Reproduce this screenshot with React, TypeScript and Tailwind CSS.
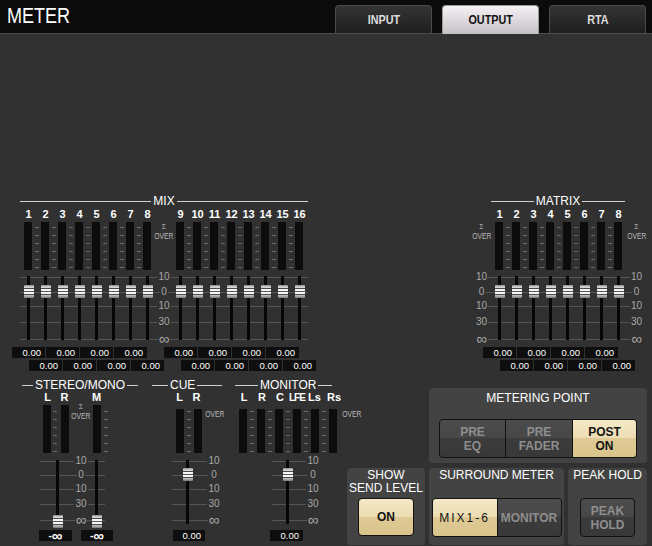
import type { ReactNode } from 'react'

const SANS = "font-['Liberation_Sans',Arial,sans-serif]"
const MARKS = ['10', '0', '10', '30', '∞']

// fader scale positions (px from top of the fader area)
const TOP_LINES = ['top-[1px]', 'top-[16px]', 'top-[30px]', 'top-[46px]', 'top-[63px]']
const TOP_LABELS = ['top-[-4px]', 'top-[11px]', 'top-[25px]', 'top-[41px]', 'top-[58px]']
const BOT_LINES = ['top-[1px]', 'top-[15px]', 'top-[29px]', 'top-[44px]', 'top-[60px]']
const BOT_LABELS = ['top-[-4px]', 'top-[10px]', 'top-[24px]', 'top-[39px]', 'top-[55px]']

const TAN = 'bg-[linear-gradient(to_bottom,#f4e8c6_0%,#ecdcb2_50%,#dfca95_50%,#d9c48c_100%)] text-[#141414]'
const DARK = 'bg-[linear-gradient(to_bottom,#4c4c4c_0%,#474747_50%,#3c3c3c_50%,#383838_100%)] text-[#8e8e8e]'

function Meter({ className = '' }: { className?: string }) {
  return <div className={`w-[8px] h-full shrink-0 bg-[#0c0c0c] ${className}`} />
}

function Ticks({ className = '' }: { className?: string }) {
  return (
    <div className={`w-[4px] shrink-0 flex flex-col gap-[7px] ${className}`}>
      {[0, 1, 2, 3, 4, 5].map(i => <div key={i} className="h-px bg-[#6a6a6a]" />)}
    </div>
  )
}

function SigmaOver({ className = '', sigma = true }: { className?: string, sigma?: boolean }) {
  return (
    <div className={`shrink-0 flex flex-col items-center text-[#b8b8b8] ${className}`}>
      {sigma && <span className="text-[7px] leading-[8px]">Σ</span>}
      <span className="text-[9px] leading-[11px] scale-x-[0.75]">OVER</span>
    </div>
  )
}

function GridLines({ tops, className }: { tops: string[], className: string }) {
  return (
    <>
      {tops.map(t => <div key={t} className={`absolute h-px bg-[#555555] ${t} ${className}`} />)}
    </>
  )
}

function Marks({ tops, className }: { tops: string[], className: string }) {
  return (
    <div className={`relative shrink-0 h-full ${className}`}>
      {tops.map((t, i) => (
        <div key={t} className={`absolute left-[-4px] right-[-4px] h-[10px] flex items-center justify-center ${t}`}>
          <span className={`bg-[#313131] px-[1px] text-[#a8a8a8] ${i === 4 ? 'text-[15px] leading-[10px]' : 'text-[10px] leading-[10px]'}`}>{MARKS[i]}</span>
        </div>
      ))}
    </div>
  )
}

function Fader({ className, cap }: { className: string, cap: string }) {
  return (
    <div className={`relative shrink-0 h-full flex justify-center ${className}`}>
      <div className="w-[3px] h-full bg-[#070707]" />
      <div className={`absolute left-1/2 -translate-x-1/2 w-[10px] h-[13px] rounded-[1px] bg-[linear-gradient(to_bottom,#8c8c8c_0px,#d4d4d4_2px,#d4d4d4_3px,#4a4a4a_3px,#4a4a4a_4px,#f5f5f5_4px,#f5f5f5_6px,#5a5a5a_6px,#5a5a5a_7px,#f5f5f5_7px,#f5f5f5_9px,#4a4a4a_9px,#4a4a4a_10px,#c8c8c8_10px,#7a7a7a_13px)] ${cap}`} />
    </div>
  )
}

function Val({ v = '0.00', className }: { v?: string, className: string }) {
  return (
    <div className={`h-[11px] shrink-0 bg-[#0e0e0e] text-[9.5px] leading-[11px] text-white text-right pr-[4px] ${className}`}>
      {v}
    </div>
  )
}

function MinusInf({ className }: { className: string }) {
  return (
    <div className={`h-[11px] shrink-0 bg-[#0e0e0e] flex items-center justify-center text-white font-bold ${className}`}>
      <span className="text-[10px] leading-[11px]">-</span>
      <span className="text-[15px] leading-[11px]">∞</span>
    </div>
  )
}

function Title({ text, left, right, className = '' }: { text: string, left: string, right: string, className?: string }) {
  return (
    <div className={`h-[13px] flex items-center ${className}`}>
      <div className={`h-px bg-[#d0d0d0] ${left}`} />
      <span className="px-[2px] text-[12px] leading-[13px] whitespace-nowrap">{text}</span>
      <div className={`h-px bg-[#d0d0d0] ${right}`} />
    </div>
  )
}

const range = (a: number, b: number) => Array.from({ length: b - a + 1 }, (_, i) => a + i)

function NumberRow({ nums }: { nums: number[] }) {
  return (
    <>
      {nums.map(n => (
        <div key={n} className="w-[17px] shrink-0 text-center text-[11px] leading-[13px] font-bold">{n}</div>
      ))}
    </>
  )
}

function MeterCols({ count }: { count: number }) {
  return (
    <>
      {range(1, count).map(i => (
        <div key={i} className="w-[17px] h-full shrink-0 flex">
          <Meter className="ml-[4px]" />
          {i < count && <Ticks className="ml-[3px] pt-[5px]" />}
        </div>
      ))}
    </>
  )
}

function FaderCols({ count }: { count: number }) {
  return (
    <>
      {range(1, count).map(i => <Fader key={i} className="w-[17px]" cap="top-[9px]" />)}
    </>
  )
}

function ValPair({ className }: { className: string }) {
  return (
    <div className={`flex gap-[1px] ${className}`}>
      {[0, 1, 2, 3].map(i => <Val key={i} className="w-[33px]" />)}
    </div>
  )
}

function MixBlock() {
  return (
    <div className="ml-[12px] w-[306px] shrink-0 flex flex-col">
      <Title text="MIX" left="flex-1" right="flex-1" className="ml-[8px] w-[288px]" />
      <div className="ml-[8px] h-[13px] flex">
        <NumberRow nums={range(1, 8)} />
        <div className="w-[16px] shrink-0" />
        <NumberRow nums={range(9, 16)} />
      </div>
      <div className="ml-[8px] mt-[1px] h-[48px] flex">
        <MeterCols count={8} />
        <SigmaOver className="w-[16px] pt-[1px]" />
        <MeterCols count={8} />
      </div>
      <div className="ml-[8px] mt-[6px] w-[288px] h-[64px] relative flex">
        <GridLines tops={TOP_LINES} className="left-0 right-0" />
        <FaderCols count={8} />
        <Marks tops={TOP_LABELS} className="w-[16px]" />
        <FaderCols count={8} />
      </div>
      <div className="mt-[7px] flex gap-[17px]">
        <ValPair className="" />
        <ValPair className="" />
      </div>
      <div className="mt-[2px] ml-[17px] flex gap-[17px]">
        <ValPair className="" />
        <ValPair className="" />
      </div>
    </div>
  )
}

function MatrixBlock() {
  return (
    <div className="ml-[154px] w-[174px] shrink-0 flex flex-col">
      <Title text="MATRIX" left="flex-1" right="flex-1" className="ml-[19px] w-[134px]" />
      <div className="ml-[19px] h-[13px] flex">
        <NumberRow nums={range(1, 8)} />
      </div>
      <div className="mt-[1px] h-[48px] flex">
        <SigmaOver className="w-[19px] pt-[1px]" />
        <MeterCols count={8} />
        <SigmaOver className="w-[19px] pt-[1px]" />
      </div>
      <div className="mt-[6px] h-[64px] relative flex">
        <GridLines tops={TOP_LINES} className="left-[14px] right-[14px]" />
        <Marks tops={TOP_LABELS} className="w-[19px]" />
        <FaderCols count={8} />
        <Marks tops={TOP_LABELS} className="w-[19px]" />
      </div>
      <ValPair className="mt-[7px] ml-[11px]" />
      <ValPair className="mt-[2px] ml-[28px]" />
    </div>
  )
}

function StereoBlock() {
  return (
    <div className="ml-[22px] w-[116px] shrink-0 flex flex-col">
      <Title text="STEREO/MONO" left="w-[11px]" right="flex-1" />
      <div className="h-[11px] flex text-[11px] leading-[11px] font-bold">
        <div className="ml-[17px] w-[17px] text-center">L</div>
        <div className="w-[17px] text-center">R</div>
        <div className="ml-[15px] w-[17px] text-center">M</div>
      </div>
      <div className="mt-[2px] h-[48px] flex">
        <Meter className="ml-[21px]" />
        <Ticks className="ml-[2px] pt-[6px]" />
        <Meter className="ml-[4px]" />
        <SigmaOver className="w-[24px] -mt-[2px]" />
        <Meter />
        <Ticks className="ml-[3px] pt-[6px]" />
      </div>
      <div className="mt-[7px] h-[64px] relative flex">
        <GridLines tops={BOT_LINES} className="left-[18px] w-[65px]" />
        <Fader className="ml-[28px] w-[15px]" cap="top-[55px]" />
        <Marks tops={BOT_LABELS} className="ml-[8px] w-[16px]" />
        <Fader className="w-[15px]" cap="top-[55px]" />
      </div>
      <div className="mt-[6px] flex">
        <MinusInf className="ml-[17px] w-[33px]" />
        <MinusInf className="ml-[9px] w-[32px]" />
      </div>
    </div>
  )
}

function CueBlock() {
  return (
    <div className="ml-[14px] w-[70px] shrink-0 flex flex-col">
      <Title text="CUE" left="w-[16px]" right="flex-1" />
      <div className="h-[11px] flex text-[11px] leading-[11px] font-bold">
        <div className="ml-[19px] w-[17px] text-center">L</div>
        <div className="w-[17px] text-center">R</div>
      </div>
      <div className="mt-[6px] h-[44px] flex">
        <Meter className="ml-[24px]" />
        <Ticks className="ml-[3px] pt-[2px]" />
        <Meter className="ml-[3px]" />
        <SigmaOver sigma={false} className="pt-[0px]" />
      </div>
      <div className="mt-[7px] h-[64px] relative flex">
        <GridLines tops={BOT_LINES} className="left-[20px] w-[36px]" />
        <Fader className="ml-[29px] w-[13px]" cap="top-[8px]" />
        <Marks tops={BOT_LABELS} className="ml-[14px] w-[12px]" />
      </div>
      <div className="mt-[6px] flex">
        <Val className="ml-[21px] w-[32px]" />
      </div>
    </div>
  )
}

function MonitorBlock() {
  const labels = ['L', 'R', 'C', 'LFE', 'Ls', 'Rs']
  return (
    <div className="ml-[13px] w-[112px] shrink-0 flex flex-col">
      <Title text="MONITOR" left="w-[23px]" right="w-[14px]" />
      <div className="h-[11px] flex text-[11px] leading-[11px] font-bold">
        <div className="w-[18px] shrink-0 text-center">L</div>
        <div className="w-[18px] shrink-0 text-center">R</div>
        <div className="w-[18px] shrink-0 text-center">C</div>
        <div className="w-[15px] shrink-0 text-center text-[10px] tracking-[-1px] whitespace-nowrap">LFE</div>
        <div className="w-[21px] shrink-0 text-center">Ls</div>
        <div className="w-[18px] shrink-0 text-center">Rs</div>
      </div>
      <div className="mt-[6px] h-[44px] flex">
        {labels.map((l, i) => (
          <div key={l} className="w-[18px] h-full shrink-0 flex">
            <Meter className="ml-[4px]" />
            {i < 5 && <Ticks className="ml-[3px] pt-[2px]" />}
          </div>
        ))}
        <SigmaOver sigma={false} className="-ml-[4px] pt-[0px]" />
      </div>
      <div className="mt-[7px] h-[64px] relative flex">
        <GridLines tops={BOT_LINES} className="left-[37px] w-[35px]" />
        <Fader className="ml-[46px] w-[13px]" cap="top-[8px]" />
        <Marks tops={BOT_LABELS} className="ml-[13px] w-[12px]" />
      </div>
      <div className="mt-[6px] flex">
        <Val className="ml-[35px] w-[33px]" />
      </div>
    </div>
  )
}

function Panel({ title, className, children }: { title: ReactNode, className: string, children: ReactNode }) {
  return (
    <div className={`shrink-0 rounded-[4px] bg-[#434343] flex flex-col items-center ${className}`}>
      <div className="text-[12px] leading-[13px] text-white text-center whitespace-nowrap">{title}</div>
      {children}
    </div>
  )
}

function Btn({ on, className, children }: { on: boolean, className: string, children: ReactNode }) {
  return (
    <div className={`flex flex-col items-center justify-center text-[12px] leading-[14px] font-bold ${on ? TAN : DARK} ${className}`}>
      {children}
    </div>
  )
}

function RightPanels() {
  return (
    <div className="w-[300px] shrink-0 flex flex-col">
      <Panel title="METERING POINT" className="ml-[82px] mt-[9px] w-[218px] h-[75px] pt-[4px]">
        <div className="mt-[14px] w-[198px] h-[39px] flex gap-px rounded-[4px] border border-[#111] bg-[#111] overflow-hidden">
          <Btn on={false} className="w-[65px]"><span>PRE</span><span>EQ</span></Btn>
          <Btn on={false} className="w-[66px]"><span>PRE</span><span>FADER</span></Btn>
          <Btn on className="flex-1"><span>POST</span><span>ON</span></Btn>
        </div>
      </Panel>
      <div className="mt-[5px] flex gap-[4px]">
        <Panel title={<><div>SHOW</div><div>SEND LEVEL</div></>} className="w-[78px] h-[77px] pt-[1px]">
          <Btn on className="mt-[3px] w-[56px] h-[38px] rounded-[4px] border border-[#111]">ON</Btn>
        </Panel>
        <Panel title="SURROUND METER" className="w-[135px] h-[77px] pt-[1px]">
          <div className="mt-[16px] w-[130px] h-[39px] flex gap-px rounded-[4px] border border-[#111] bg-[#111] overflow-hidden">
            <Btn on className="w-[64px] font-normal tracking-[2px]">MIX1-6</Btn>
            <Btn on={false} className="flex-1">MONITOR</Btn>
          </div>
        </Panel>
        <Panel title="PEAK HOLD" className="w-[79px] h-[77px] pt-[1px]">
          <Btn on={false} className="mt-[16px] w-[55px] h-[39px] rounded-[4px] border border-[#111]">
            <span>PEAK</span><span>HOLD</span>
          </Btn>
        </Panel>
      </div>
    </div>
  )
}

function Tab({ label, active = false }: { label: string, active?: boolean }) {
  return (
    <div
      className={`w-[97px] rounded-t-[4px] border border-b-0 flex items-center justify-center text-[12px] font-bold ${
        active
          ? 'relative z-10 -mb-px h-[29px] border-[#9a9a9a] bg-[linear-gradient(to_bottom,#f4f0f4,#d8d4d8_60%,#c4c0c4)] text-[#111]'
          : 'h-[28px] border-[#4a4a4a] bg-[linear-gradient(to_bottom,#343434,#1e1e1e)] text-[#dcdcdc]'
      }`}
    >
      <span className="scale-x-[0.9]">{label}</span>
    </div>
  )
}

export default function App() {
  return (
    <div className={`w-[652px] h-[546px] overflow-hidden bg-[#313131] text-white flex flex-col ${SANS}`}>
      <div className="h-[34px] shrink-0 flex items-end bg-[#0b0b0b] border-b border-[#4e4e4e]">
        <div className="ml-[7px] mb-[6px] w-[64px] text-[22px] leading-[22px] text-white">
          <div className="origin-left scale-x-[0.82] whitespace-nowrap">METER</div>
        </div>
        <div className="ml-auto mr-[6px] flex items-end gap-[10px]">
          <Tab label="INPUT" />
          <Tab label="OUTPUT" active />
          <Tab label="RTA" />
        </div>
      </div>
      <div className="mt-[161px] flex">
        <MixBlock />
        <MatrixBlock />
      </div>
      <div className="mt-[8px] flex">
        <StereoBlock />
        <CueBlock />
        <MonitorBlock />
        <RightPanels />
      </div>
    </div>
  )
}
